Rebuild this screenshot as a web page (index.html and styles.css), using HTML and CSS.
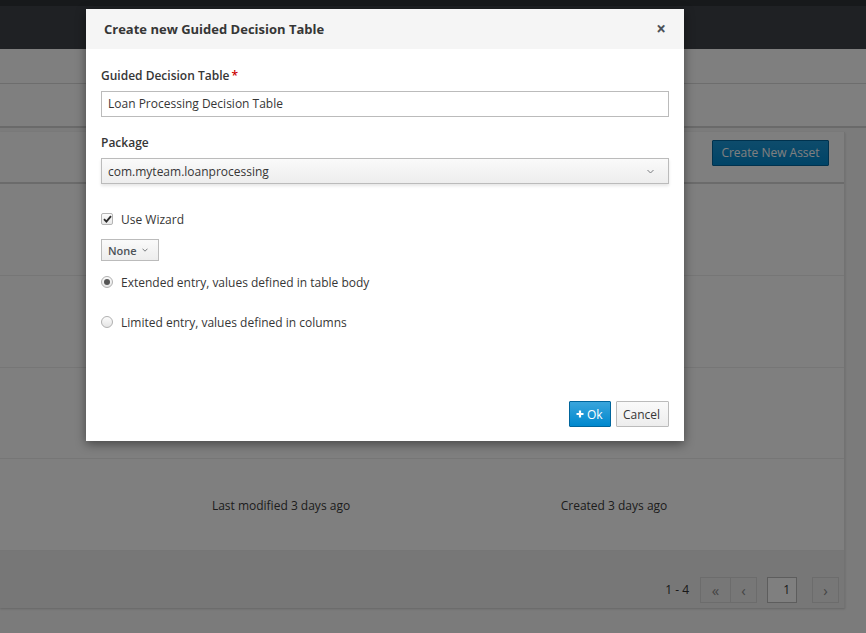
FILE: index.html
```html
<!DOCTYPE html>
<html>
<head>
<meta charset="utf-8">
<link rel="stylesheet" href="styles.css">
</head>
<body>
<div class="page">
  <div class="topstrip"></div>
  <div class="navbar"></div>
  <div class="band band-a"></div>
  <div class="band band-b"></div>
  <div class="content">
    <div class="card">
      <div class="card-head">
        <button class="btn-asset">Create New Asset</button>
      </div>
      <div class="row"></div>
      <div class="row"></div>
      <div class="row"></div>
      <div class="row row-meta">
        <span class="cell cell-mod">Last modified 3 days ago</span>
        <span class="cell cell-created">Created 3 days ago</span>
      </div>
      <div class="card-foot">
        <span class="range">1 - 4</span>
        <div class="pager-group">
          <span class="pbtn pbtn-first">«</span>
          <span class="pbtn pbtn-prev">‹</span>
        </div>
        <span class="page-input">1</span>
        <span class="pbtn pbtn-next">›</span>
      </div>
    </div>
    <div class="side"></div>
  </div>

  <div class="backdrop"></div>

  <div class="modal">
    <div class="modal-head">
      <span class="modal-title">Create new Guided Decision Table</span>
      <span class="close">×</span>
    </div>
    <div class="modal-body">
      <label class="label">Guided Decision Table<span class="req">*</span></label>
      <div class="input">Loan Processing Decision Table</div>

      <label class="label label-pkg">Package</label>
      <div class="select">
        <span>com.myteam.loanprocessing</span>
        <svg class="chev" width="7" height="5" viewBox="0 0 7 5"><path d="M0.5 1 L3.5 4 L6.5 1" fill="none" stroke="#7a7d80" stroke-width="1"/></svg>
      </div>

      <div class="check-row">
        <span class="checkbox">
          <svg width="9" height="8" viewBox="0 0 9 8"><path d="M1 4.2 L3.4 6.6 L8 1.2" fill="none" stroke="#2b2b2b" stroke-width="1.9"/></svg>
        </span>
        <span class="opt-text">Use Wizard</span>
      </div>

      <div class="none-btn">None
        <svg class="none-chev" width="6" height="4" viewBox="0 0 6 4"><path d="M0.5 0.7 L3 3.2 L5.5 0.7" fill="none" stroke="#6a6d70" stroke-width="0.9"/></svg>
      </div>

      <div class="radio-row">
        <span class="radio checked"><span class="dot"></span></span>
        <span class="opt-text">Extended entry, values defined in table body</span>
      </div>
      <div class="radio-row radio-row-2">
        <span class="radio"></span>
        <span class="opt-text">Limited entry, values defined in columns</span>
      </div>
    </div>
    <div class="modal-foot">
      <button class="btn btn-ok">
        <svg width="8" height="8" viewBox="0 0 8 8"><path d="M4 0.5 V7.5 M0.5 4 H7.5" stroke="#fff" stroke-width="2.2"/></svg>Ok</button>
      <button class="btn btn-cancel">Cancel</button>
    </div>
  </div>
</div>
</body>
</html>
```

FILE: styles.css
```css
* { box-sizing: border-box; }
html, body { margin: 0; padding: 0; }
body {
  font-family: "Open Sans", "Noto Sans", sans-serif;
  font-size: 12px;
  color: #363636;
}
.page {
  position: relative;
  width: 866px;
  height: 633px;
  overflow: hidden;
  background: #f6f6f6;
}
.topstrip { height: 6px; background: #2e3237; }
.navbar { height: 43px; background: #3e4248; }
.band { background: #fff; border-bottom: 1px solid #dadada; }
.band-a { height: 35px; }
.band-b { height: 44px; border-bottom: 2px solid #d4d4d4; }

.content { display: flex; margin-top: 4px; }
.card {
  width: 845px;
  background: #fff;
  box-shadow: 0 1px 2px rgba(0,0,0,0.18);
  border-right: 1px solid #e4e4e4;
}
.side { flex: 1; }
.card-head {
  height: 52px;
  border-bottom: 2px solid #d6d6d6;
  display: flex;
  justify-content: flex-end;
  align-items: flex-start;
  padding: 8px 15px 0 0;
}
.btn-asset {
  font-family: inherit;
  font-size: 12px;
  color: #fff;
  height: 26px;
  width: 117px;
  padding: 0 0 1px 0;
  border: 1px solid #00659c;
  border-radius: 1px;
  background: linear-gradient(#1c98d8, #0088ce);
}
.row { height: 92px; border-bottom: 1px solid #ececec; }
.row:nth-of-type(4) { height: 91px; }
.row-meta {
  display: grid;
  grid-template-columns: 150px 262px 71px 262px;
  align-items: center;
  color: #3a3a3a;
  padding-top: 2px;
}
.cell-mod { grid-column: 2; text-align: center; }
.cell-created { grid-column: 4; text-align: center; }
.card-foot {
  height: 57px;
  background: #eeeeee;
  display: flex;
  justify-content: flex-end;
  align-items: flex-end;
  padding: 0 5px 5px 0;
}
.range { font-size: 12px; color: #333; height: 26px; line-height: 26px; margin-right: 11px; }
.pager-group { display: flex; }
.pbtn {
  width: 27px;
  height: 26px;
  border: 1px solid #d8d8d8;
  display: flex;
  align-items: center;
  justify-content: center;
  color: #8a8a8a;
  font-size: 15px;
  line-height: 1;
}
.pbtn-first { width: 31px; }
.pbtn-prev { width: 26px; border-left: none; }
.page-input {
  width: 30px;
  height: 26px;
  border: 1px solid #bbbbbb;
  background: #fff;
  margin-left: 10px;
  margin-right: 15px;
  text-align: right;
  padding-right: 6px;
  line-height: 24px;
  color: #363636;
}
.backdrop {
  position: absolute;
  inset: 0;
  background: rgba(0,0,0,0.5);
}

.modal {
  position: absolute;
  left: 86px;
  top: 9px;
  width: 598px;
  height: 432px;
  background: #fff;
  box-shadow: 0 3px 10px rgba(0,0,0,0.45);
  display: flex;
  flex-direction: column;
}
.modal-head {
  height: 40px;
  background: #f5f5f5;
  display: flex;
  align-items: center;
  justify-content: space-between;
  padding: 0 18px 0 18px;
}
.modal-title { font-size: 13px; font-weight: 700; color: #363636; }
.close { font-size: 17px; font-weight: 700; color: #4d5258; line-height: 1; margin-top: -1px; }
.modal-body {
  flex: 1;
  padding: 18px 15px 0 15px;
  display: flex;
  flex-direction: column;
}
.label { font-weight: 600; font-size: 12px; line-height: 18px; color: #363636; }
.req { color: #cc0000; margin-left: 2px; }
.input {
  margin-top: 6px;
  height: 26px;
  border: 1px solid #bbbbbb;
  padding: 0 6px;
  line-height: 24px;
  color: #363636;
}
.label-pkg { margin-top: 17px; }
.select {
  margin-top: 6px;
  height: 26px;
  border: 1px solid #bbbbbb;
  background: linear-gradient(#fafafa, #ededed);
  box-shadow: 0 2px 3px rgba(3,3,3,0.10);
  padding: 0 14px 0 6px;
  display: flex;
  align-items: center;
  justify-content: space-between;
  color: #363636;
}
.chev { margin-top: 1px; }
.check-row { display: flex; align-items: center; margin-top: 26px; height: 18px; }
.checkbox {
  width: 12px;
  height: 12px;
  border: 1px solid #b4b4b4;
  border-radius: 2px;
  background: linear-gradient(#fcfcfc, #e8e8e8);
  display: flex;
  align-items: center;
  justify-content: center;
  margin-right: 8px;
}
.opt-text { font-size: 12px; color: #363636; }
.none-btn {
  margin-top: 11px;
  width: 58px;
  height: 22px;
  border: 1px solid #bbbbbb;
  background: linear-gradient(#fafafa, #ededed);
  font-size: 11px;
  font-weight: 600;
  color: #4d5258;
  display: flex;
  align-items: center;
  padding-left: 6px;
  gap: 5px;
}
.radio-row { display: flex; align-items: center; margin-top: 12px; height: 18px; }
.radio-row-2 { margin-top: 22px; }
.radio {
  width: 12px;
  height: 12px;
  border: 1px solid #b0b0b0;
  border-radius: 50%;
  background: linear-gradient(#fcfcfc, #e4e4e4);
  margin-right: 8px;
  display: flex;
  align-items: center;
  justify-content: center;
}
.dot { width: 6px; height: 6px; border-radius: 50%; background: #555; }
.modal-foot {
  display: flex;
  justify-content: flex-end;
  gap: 5px;
  padding: 0 15px 14px 0;
}
.btn {
  font-family: inherit;
  font-size: 12px;
  height: 26px;
  padding: 0 6px;
  border-radius: 1px;
  display: flex;
  align-items: center;
  gap: 3px;
}
.btn-ok {
  color: #fff;
  background: linear-gradient(#39a5dc, #0088ce);
  border: 1px solid #00659c;
  width: 42px;
}
.btn-cancel {
  color: #363636;
  background: linear-gradient(#fafafa, #ededed);
  border: 1px solid #bbbbbb;
  width: 53px;
}
```
